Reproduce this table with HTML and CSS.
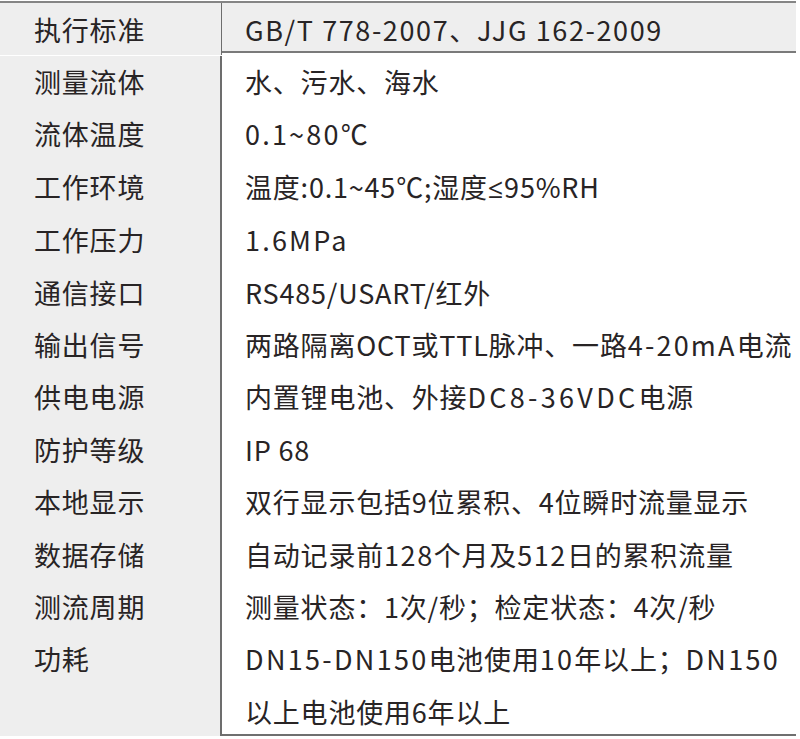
FILE: index.html
```html
<!DOCTYPE html>
<html lang="zh">
<head>
<meta charset="utf-8">
<link rel="stylesheet" href="styles.css">
</head>
<body>
<div class="spec">
  <div class="row head">
    <div class="k">执行标准</div>
    <div class="v"><span class="w0">GB/T 778-2007</span>、<span class="w0">JJG 162-2009</span></div>
  </div>
  <div class="body">
    <div class="row"><div class="k">测量流体</div><div class="v">水、污水、海水</div></div>
    <div class="row"><div class="k">流体温度</div><div class="v"><span class="w1">0.1~80</span>℃</div></div>
    <div class="row"><div class="k">工作环境</div><div class="v">温度:0.1~45℃;湿度<span class="sym">≤</span>95%RH</div></div>
    <div class="row"><div class="k">工作压力</div><div class="v"><span class="w1">1.6MPa</span></div></div>
    <div class="row"><div class="k">通信接口</div><div class="v">RS485/USART/红外</div></div>
    <div class="row"><div class="k">输出信号</div><div class="v">两路隔离OCT或TTL脉冲、一路<span class="w1">4-20mA</span>电流</div></div>
    <div class="row"><div class="k">供电电源</div><div class="v">内置锂电池、外接<span class="w3">DC8-36VDC</span>电源</div></div>
    <div class="row"><div class="k">防护等级</div><div class="v">IP 68</div></div>
    <div class="row"><div class="k">本地显示</div><div class="v">双行显示包括9位累积、4位瞬时流量显示</div></div>
    <div class="row"><div class="k">数据存储</div><div class="v">自动记录前<span class="w0">128</span>个月及<span class="w0">512</span>日的累积流量</div></div>
    <div class="row"><div class="k">测流周期</div><div class="v">测量状态：1次/秒；检定状态：4次/秒</div></div>
    <div class="row"><div class="k">功耗</div><div class="v"><span class="w2">DN15-DN150</span>电池使用<span class="w2">10</span>年以上；<span class="w2">DN150</span><br>以上电池使用6年以上</div></div>
  </div>
</div>
</body>
</html>
```
FILE: styles.css
```css
html, body {
  margin: 0;
  padding: 0;
  background: #ffffff;
}
body {
  font-family: "Noto Sans CJK SC", "Noto Sans", sans-serif;
  color: #282425;
}
.spec {
  margin-top: 1px;
  width: 796px;
  border-top: 2px solid #858585;
  border-bottom: 2px solid #6f6f6f;
}
.row {
  display: grid;
  grid-template-columns: 222px 1fr;
  font-size: 27px;
  letter-spacing: 0.8px;
}
.k {
  background: #eeeeee;
  border-right: 2px solid #6d6d6d;
  padding-left: 34px;
}
.v {
  padding-left: 23px;
  white-space: nowrap;
}
.w0 {
  letter-spacing: 1.6px;
}
.w1 {
  letter-spacing: 2.2px;
}
.w2 {
  letter-spacing: 2.3px;
}
.w3 {
  letter-spacing: 3.3px;
}
.sym {
  font-family: "Open Sans", "Noto Sans", sans-serif;
}
.head {
  height: 48px;
  line-height: 50px;
  background: #eeeeee;
  border-bottom: 2px solid #7a7a7a;
}
.head .k, .head .v {
  padding-top: 2px;
  box-sizing: border-box;
}
.head .k {
  border-right-width: 1px;
}
.body {
  padding-top: 3px;
}
.body .row {
  line-height: 52.4px;
}
.body .row:last-child {
  margin-bottom: -4px;
}
```
